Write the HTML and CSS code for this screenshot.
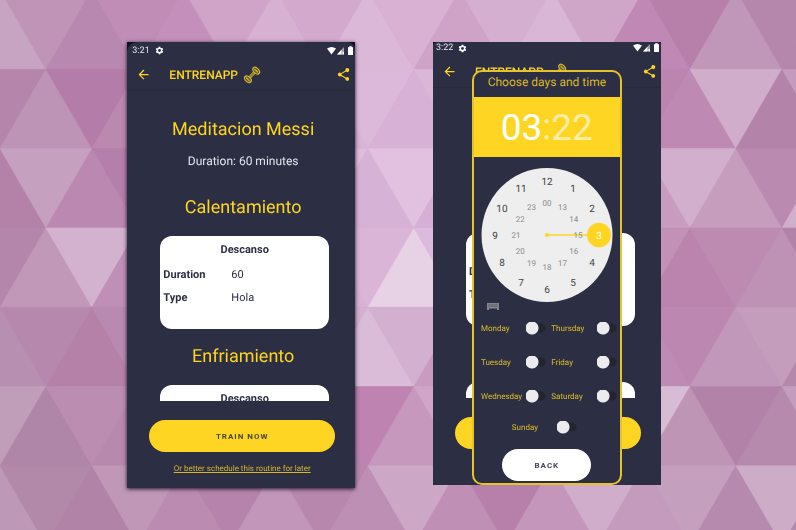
FILE: index.html
```html
<!DOCTYPE html>
<html lang="en">
<head>
<meta charset="utf-8">
<title>Entrenapp</title>
<link rel="stylesheet" href="styles.css">
</head>
<body>
<svg class="backdrop" viewBox="0 0 796 530" preserveAspectRatio="xMidYMid slice" aria-hidden="true"></svg>

<svg class="symbols" aria-hidden="true">
  <symbol id="gear" viewBox="0 0 24 24"><path fill-rule="evenodd" d="M19.4 13a7.500 7.500 0 0 0 0-2l2.100-1.600a.5.5 0 0 0 .1-.7l-2-3.400a.5.5 0 0 0-.6-.2l-2.500 1a7.300 7.300 0 0 0-1.700-1l-.4-2.600a.5.500 0 0 0-.5-.5h-4a.5.5 0 0 0-.5.4L9 5.100a7.700 7.700 0 0 0-1.700 1l-2.500-1a.5.5 0 0 0-.6.2l-2 3.400a.5.5 0 0 0 .1.700L4.500 11a7.900 7.900 0 0 0 0 2l-2.100 1.600a.5.5 0 0 0-.1.700l2 3.400c.1.2.4.3.6.2l2.500-1a7.300 7.300 0 0 0 1.700 1l.4 2.600c0 .3.2.5.5.5h4c.3 0 .5-.2.5-.5l.4-2.600a7.700 7.700 0 0 0 1.700-1l2.500 1c.2.1.5 0 .6-.2l2-3.400a.5.5 0 0 0-.1-.7zM12 15.800a3.800 3.800 0 1 1 0-7.600 3.800 3.800 0 0 1 0 7.600z"/></symbol>
  <symbol id="radio" viewBox="0 0 27 10"><path d="M0 2.600Q4.500-.8 9 2.600L4.500 8.500z"/><path opacity=".55" d="M10 8.500 17 1v7.500z"/><path d="M10 8.500 14.500 3.700V8.500z"/><path d="M15.500 6h1.500v2.500h-1.500zM21 1.300h1.200V.3h2.600v1H26V9h-5z"/></symbol>
  <symbol id="back" viewBox="0 0 24 24"><path d="M20 11H7.800l5.600-5.600L12 4l-8 8 8 8 1.400-1.400L7.800 13H20z"/></symbol>
  <symbol id="share" viewBox="0 0 24 24"><path d="M18 16c-.8 0-1.400.3-2 .8l-7.100-4.200a3.300 3.300 0 0 0 0-1.400L16 7.100A3 3 0 1 0 15 5l.1.700L8 9.800a3 3 0 1 0 0 4.400l7.100 4.100-.1.700a3 3 0 1 0 3-3z"/></symbol>
  <symbol id="dumbbell" viewBox="0 0 20 20"><g transform="rotate(-46 10 10)" fill="none" stroke="#d9b92c" stroke-width="1.300"><path fill="#8a7a35" stroke-width=".8" d="M5 8.700h10v2.600H5z"/><ellipse cx="3.400" cy="10" rx="2.900" ry="4.400" fill="#5f5832"/><ellipse cx="16.600" cy="10" rx="2.900" ry="4.400" fill="#5f5832"/><path d="M3.400 7.500v5M16.600 7.500v5"/></g></symbol>
</svg>

<main class="stage">
  <section class="phone phone-raised" aria-label="Routine">
    <div class="screen">
      <div class="status"><span>3:21</span><svg class="gear"><use href="#gear"/></svg><svg class="radio"><use href="#radio"/></svg></div>
      <header class="appbar">
        <button class="icon-button" aria-label="Back"><svg><use href="#back"/></svg></button>
        <span class="brand">ENTRENAPP</span>
        <svg class="dumbbell"><use href="#dumbbell"/></svg>
        <button class="icon-button share" aria-label="Share"><svg><use href="#share"/></svg></button>
      </header>
      <div class="routine">
        <h1>Meditacion Messi</h1>
        <p class="length">Duration: 60 minutes</p>
        <h2>Calentamiento</h2>
        <article class="card">
          <h3>Descanso</h3>
          <dl><dt>Duration</dt><dd>60</dd><dt>Type</dt><dd>Hola</dd></dl>
        </article>
        <h2>Enfriamiento</h2>
        <article class="card"><h3>Descanso</h3></article>
      </div>
      <div class="actions">
        <button class="train">TRAIN NOW</button>
        <a class="later" href="#schedule">Or better schedule this routine for later</a>
      </div>
    </div>
  </section>

  <section class="phone phone-short" aria-label="Schedule">
    <div class="screen">
      <div class="status"><span>3:22</span><svg class="gear"><use href="#gear"/></svg><svg class="radio"><use href="#radio"/></svg></div>
      <header class="appbar">
        <button class="icon-button" aria-label="Back"><svg><use href="#back"/></svg></button>
        <span class="brand">ENTRENAPP</span>
        <svg class="dumbbell"><use href="#dumbbell"/></svg>
        <button class="icon-button share" aria-label="Share"><svg><use href="#share"/></svg></button>
      </header>
      <div class="routine">
        <h1>Meditacion Messi</h1>
        <p class="length">Duration: 60 minutes</p>
        <h2>Calentamiento</h2>
        <article class="card">
          <h3>Descanso</h3>
          <dl><dt>Duration</dt><dd>60</dd><dt>Type</dt><dd>Hola</dd></dl>
        </article>
        <h2>Enfriamiento</h2>
        <article class="card"><h3>Descanso</h3></article>
      </div>
      <div class="actions">
        <button class="train">TRAIN NOW</button>
      </div>
    </div>

    <div class="dialog" id="schedule" role="dialog" aria-labelledby="dialog-title">
      <h2 class="dialog-title" id="dialog-title">Choose days and time</h2>
      <div class="time"><button class="active">03</button><span>:</span><button>22</button></div>
      <svg class="clock" viewBox="0 0 132 136" role="img" aria-label="Clock face">
        <ellipse cx="66" cy="68" rx="65.500" ry="67" fill="#eee"/>
        <path d="M66 68h42" stroke="#fdd522" stroke-width="1.500"/>
        <circle cx="66" cy="68" r="2" fill="#fdd522"/>
        <ellipse cx="118" cy="68" rx="12" ry="12.300" fill="#fdd522"/>
        <g class="hours"></g>
      </svg>
      <button class="keyboard" aria-label="Type the time">
        <svg viewBox="0 0 12 7"><path fill="#85868c" d="M0 0h12v7h-2V5.500H2V7H0z"/><path stroke="#4a4b57" stroke-width=".7" d="M2 1v3M4 1v3M6 1v3M8 1v3M10 1v3"/></svg>
      </button>
      <div class="days">
        <label>Monday<input type="checkbox"></label>
        <label>Thursday<input type="checkbox"></label>
        <label>Tuesday<input type="checkbox"></label>
        <label>Friday<input type="checkbox"></label>
        <label>Wednesday<input type="checkbox"></label>
        <label>Saturday<input type="checkbox"></label>
      </div>
      <label class="sunday">Sunday<input type="checkbox"></label>
      <button class="close">BACK</button>
    </div>
  </section>
</main>
<script src="page.js"></script>
</body>
</html>
```
FILE: styles.css
```css
* { box-sizing: border-box; }

body {
  margin: 0;
  min-height: 100vh;
  overflow: hidden;
  background: #c497bc;
  color: #fdd522;
  font-family: Roboto, "Liberation Sans", sans-serif;
  text-rendering: geometricPrecision;
}

button {
  margin: 0;
  padding: 0;
  border: 0;
  background: none;
  color: inherit;
  font: inherit;
}

h1, h2, h3, p, dl, dd { margin: 0; font-weight: 400; }

.symbols { position: absolute; width: 0; height: 0; }

.backdrop {
  position: fixed;
  inset: 0;
  z-index: -1;
  width: 100%;
  height: 100%;
}

.stage {
  display: grid;
  grid-template-columns: 1fr 1fr;
  align-items: start;
  gap: 78px;
  padding: 42px 17% 0 16%;
}

.phone {
  position: relative;
  background: #10101a;
}

.phone-raised { box-shadow: 0 1px 4px rgba(20, 10, 30, .9); }

.screen {
  padding-bottom: 13px;
  border-radius: 10px 8px 0 0;
  background: #2c2e43;
}

.phone-short .screen { padding-bottom: 36px; border-radius: 4px 2px 0 0; }

.status {
  display: flex;
  align-items: center;
  height: 17px;
  padding: 0 1px 0 5px;
  color: #e8e8ee;
  fill: #fff;
  font-size: 9px;
}

.phone-short .status { height: 14px; padding: 0 1px 2px 3px; }

.gear { width: 9px; height: 9px; margin-left: 5px; }
.radio { width: 27px; height: 10px; margin-left: auto; }

.appbar {
  display: flex;
  align-items: center;
  height: 32px;
  padding: 0 4px 0 9px;
  border-bottom: 1px solid #292b3d;
  fill: #fdd522;
}

.icon-button { width: 15px; height: 15px; }
.icon-button svg { display: block; width: 100%; height: 100%; }
.share { margin-left: auto; }

.brand { margin-left: 18px; font-size: 12px; font-weight: 500; }
.dumbbell { width: 18px; height: 18px; margin-left: 5px; }

.routine {
  height: 310px;
  padding: 22px 26px 0 33px;
  overflow: hidden;
  text-align: center;
}

.routine h1, .routine h2 { margin: 0 3px 0 0; font-size: 18px; line-height: 33px; }
.length { margin: 7px 3px 22px 0; color: #e4e4ec; font-size: 12px; line-height: 16px; }

.card {
  height: 93px;
  margin: 12px 0 11px;
  padding: 6px 3px;
  border-radius: 12px;
  background: #fff;
  color: #2c2e43;
  font-size: 11px;
}

.card h3 { font-size: 11px; font-weight: 700; line-height: 16px; }
.card dl { display: grid; grid-template-columns: 68px 1fr; line-height: 23px; margin-top: 5px; text-align: left; }
.card dt { font-weight: 700; }

.actions {
  display: flex;
  flex-direction: column;
  align-items: center;
  padding: 19px 20px 0 22px;
}

.train {
  width: 100%;
  height: 32px;
  border-radius: 16px;
  background: #fdd522;
  color: #4a4636;
  font-size: 8px;
  font-weight: 700;
  letter-spacing: 1px;
}

.later { margin-top: 11px; color: #d5b52c; font-size: 8px; line-height: 12px; }

.dialog {
  position: absolute;
  inset: 28px 39px 0 39px;
  display: flex;
  flex-direction: column;
  align-items: center;
  border: 2px solid #e6c32a;
  border-radius: 10px;
  background: #2c2e43;
  font-size: 9px;
}

.dialog-title { height: 25px; font-size: 12px; line-height: 21px; color: #d9b92c; }

.time {
  display: flex;
  justify-content: center;
  width: 100%;
  height: 60px;
  padding-top: 1px;
  background: #fdd522;
  color: #feeea6;
  font-size: 37px;
  line-height: 60px;
}

.time .active { color: #fff; }

.clock { width: 132px; height: 136px; margin-top: 10px; }
.clock text { text-anchor: middle; fill: #444; font-size: 10px; }
.clock .inner { fill: #8a8a8a; font-size: 8px; }
.clock .picked { fill: #fff; }

.keyboard { align-self: flex-start; width: 12px; height: 7px; margin-left: 13px; }
.keyboard svg { display: block; }

.days {
  display: grid;
  grid-template-columns: 1fr 1fr;
  column-gap: 5px;
  width: 100%;
  margin-top: 1px;
  padding: 0 3px 0 7px;
}

label {
  display: flex;
  align-items: center;
  justify-content: space-between;
  height: 34px;
  color: #dcbb2b;
  font-size: 8px;
}

.sunday { width: 65px; height: 28px; margin-right: 5px; }

input {
  appearance: none;
  flex: none;
  width: 20px;
  height: 13px;
  margin: 0;
  background:
    radial-gradient(circle at 6px 6px, #ececec 6px, transparent 7px),
    radial-gradient(circle at 15px 6px, #23242f 4px, transparent 5px);
}

.close {
  width: 89px;
  height: 32px;
  margin-top: 8px;
  border-radius: 16px;
  background: #fff;
  color: #44465a;
  font-size: 8px;
  font-weight: 700;
  letter-spacing: 1px;
}
```
FILE: page.js
```js
const NS = "http://www.w3.org/2000/svg";

// One line per band of triangles, left to right; "-" repeats the previous colour.
const bands = [
  "c7a4c1 bf94b6 b888b0 bf8db6 c490bb cfa4c8 d7b1d2 d3aacd dbb7d8 d8b1d3 cfa2c8 d5afd0 d9b6d5 cfa6c8 c088b4 b780ab c197b9 b587ac b587ac",
  "b685ab be94b6 b47da9 bb88b0 - - - d8b4d5 dcb9da d8b2d6 dab6d8 - - - bc85b0 be8ab4 d0aecb b483aa c49abd",
  "b482a9 c5a0bf bb88b1 b57fab - - - e0bcdc d7b2d7 e2c1e0 d5afd5 - - - c79cbf d2afcd c79dbe bb8ab0 d0b0cb",
  "b586ab c298b9 d3b2cf c08fb7 - - - d8b3d6 dbb5d8 e7d1e5 dcbadd - - - c391b7 bb84af bd8bb2 bd92b4 b283a9",
  "b78fb0 b788ad b581a9 b88ab1 - - - d5b0d0 dabbd8 d4b0d0 ca9bc0 - - - bd8bb3 bc88b1 c198b9 c49dbd b488ad",
  "c09db9 b086a8 bb8db1 b789ad - - - ba85b0 be83b0 c698be cfa6c8 - - - d8bcd5 bf95b6 b382a8 b58aac c49dbd",
  "be99b7 b389aa b083a7 c097b7 bb8bb1 b583ab c196ba b887ae be8fb5 cda8c6 bf8fb5 b680aa c496bc d0adca c49abd c49fbe b58aae cdacc8 b48aae"
];
const side = 46, tall = 79.3, start = -10;
const backdrop = document.querySelector(".backdrop");

bands.forEach((band, row) => {
  let colour = "";
  const top = start + row * tall, bottom = top + tall;
  band.split(" ").forEach((value, i) => {
    if (value !== "-") colour = "#" + value;
    const x = i * side;
    const up = (i + row) % 2 === 0;
    const tip = up ? top : bottom, base = up ? bottom : top;
    const shape = document.createElementNS(NS, "polygon");
    shape.setAttribute("points", `${x},${tip} ${x - side},${base} ${x + side},${base}`);
    shape.setAttribute("fill", colour);
    shape.setAttribute("stroke", colour);
    shape.setAttribute("stroke-width", ".5");
    backdrop.append(shape);
  });
});

const hours = document.querySelector(".hours");
function ring(labels, rx, ry, drop, name) {
  labels.forEach((label, i) => {
    const angle = i * Math.PI / 6;
    const text = document.createElementNS(NS, "text");
    text.setAttribute("x", 66 + rx * Math.sin(angle));
    text.setAttribute("y", 68 - ry * Math.cos(angle) + drop);
    text.setAttribute("class", label === "3" ? "picked" : name);
    text.textContent = label;
    hours.append(text);
  });
}
ring(["12", "1", "2", "3", "4", "5", "6", "7", "8", "9", "10", "11"], 52, 54, 4, "outer");
ring(["00", "13", "14", "15", "16", "17", "18", "19", "20", "21", "22", "23"], 31, 32, 3, "inner");
```
